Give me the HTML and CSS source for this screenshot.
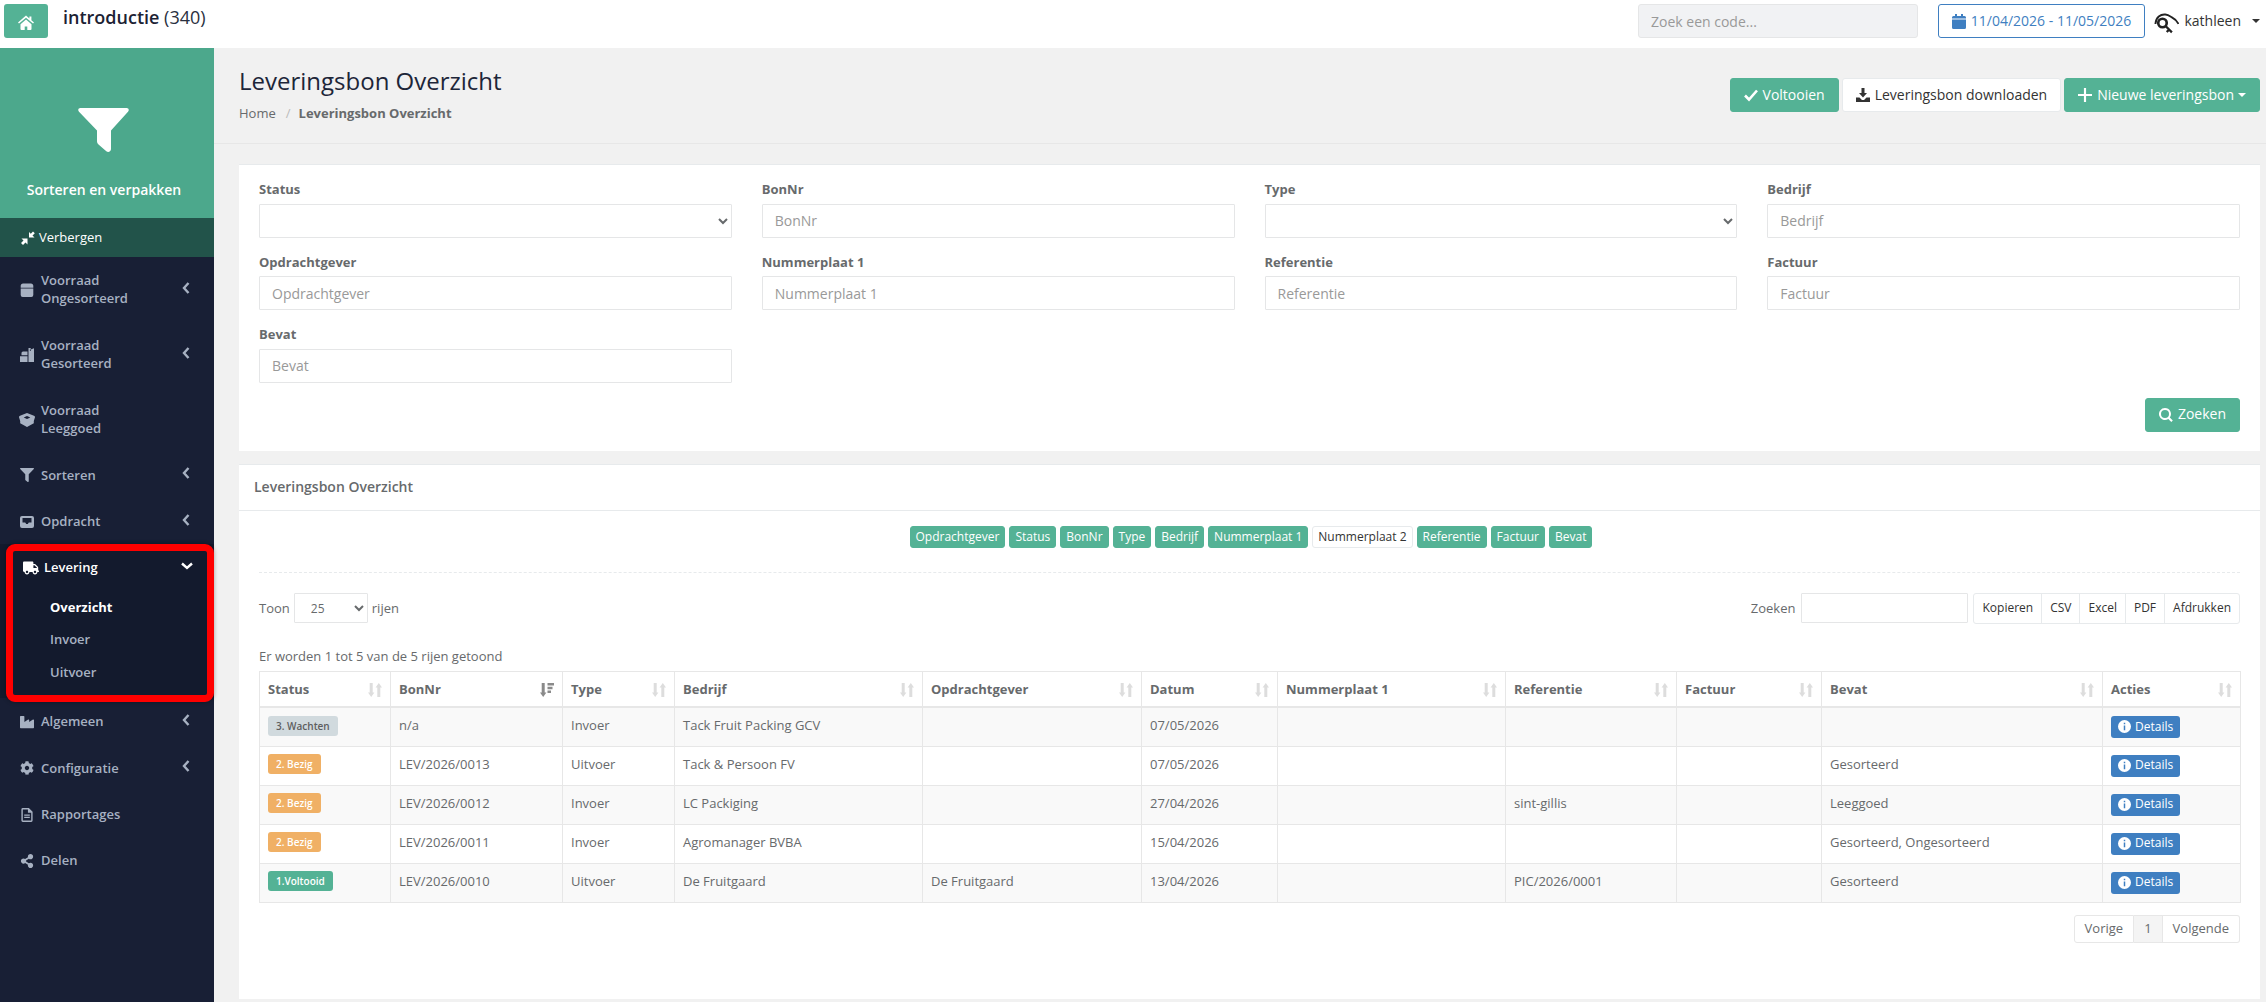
FILE: index.html
```html
<!DOCTYPE html>
<html lang="nl">
<head>
  <meta charset="UTF-8" />
  <title>Leveringsbon Overzicht</title>
  <link rel="stylesheet" href="styles.css">
</head>
<body>
  <svg class="sprite" xmlns="http://www.w3.org/2000/svg">
    <symbol id="i-home" viewBox="0 0 16 15"><path d="M8 .6 0 7.4l1 1.2 7-5.9 7 5.9 1-1.2-2.6-2.2V1.400h-2v2.100zM2.500 9.200 8 4.600l5.500 4.600V14a1 1 0 0 1-1 1H9.300v-3.500H6.700V15H3.500a1 1 0 0 1-1-1z"/></symbol>
    <symbol id="i-funnel" viewBox="0 0 51 44" preserveAspectRatio="none"><path d="M2.500 0h46c2.200 0 3 2.200 1.500 3.700L33 22.500V41c0 2.500-2.700 3.800-4.700 2.200l-7.500-6.500c-1.100-.9-1.800-2-1.800-3.500V22.500L1 3.700C-.5 2.200.3 0 2.500 0z"/></symbol>
    <symbol id="i-compress" viewBox="0 0 14 14"><path d="M8 6.500V1l1.800 1.800L12 .5l1.800 1.700-2.300 2.300 2 2zM6.500 7.500v6l-2-2L2 14l-2-2 2.500-2.500-2-2z"/></symbol>
    <symbol id="i-box" viewBox="0 0 12 12"><path d="M.6 4.700h10.800v5.600A1.700 1.700 0 0 1 9.700 12H2.300A1.700 1.700 0 0 1 .6 10.300zM2.600.4h6.800c1.200 0 2 .9 2 2v1.600H.6V2.400c0-1.100.8-2 2-2z"/></symbol>
    <symbol id="i-boxes" viewBox="0 0 14 14"><path d="M8.500 0h2.200v1.500h-.8V3h.8V1.500L14 .3V14H8.500zM3 3.500h4.500v3.700H1.500V5a1.500 1.500 0 0 1 1.500-1.500zM0 8.200h7.500V14H0z"/></symbol>
    <symbol id="i-hex" viewBox="0 0 16 14"><path fill-rule="evenodd" d="M8 0l7 2.800c.7.300 1 .8 1 1.500L14.800 8v2.300L8 14l-6.800-3.700V8L0 4.300c0-.7.300-1.200 1-1.500zM8 3 4.700 4.500 8 6l3.300-1.500z"/></symbol>
    <symbol id="i-filter" viewBox="0 0 512 512"><path d="M487.976 0H24.028C2.710 0-8.047 25.866 7.058 40.971L192 225.941V432c0 7.831 3.821 15.170 10.237 19.662l80 55.980C298.020 518.690 320 507.493 320 487.980V225.941l184.947-184.970C520.021 25.896 509.338 0 487.976 0z"/></symbol>
    <symbol id="i-inbox" viewBox="0 0 14 12"><path fill-rule="evenodd" d="M2 0h10a2 2 0 0 1 2 2v8a2 2 0 0 1-2 2H2a2 2 0 0 1-2-2V2a2 2 0 0 1 2-2zm.5 2v4.500h2.700l1 1.500h1.600l1-1.500h2.700V2z"/></symbol>
    <symbol id="i-truck" viewBox="0 0 640 512"><path d="M624 352h-16V243.900c0-12.700-5.100-24.900-14.100-33.900L494 110.100c-9-9-21.200-14.100-33.900-14.100H416V48c0-26.500-21.500-48-48-48H48C21.500 0 0 21.500 0 48v320c0 26.500 21.500 48 48 48h16c0 53 43 96 96 96s96-43 96-96h128c0 53 43 96 96 96s96-43 96-96h48c8.800 0 16-7.200 16-16v-32c0-8.800-7.200-16-16-16zM160 464c-26.500 0-48-21.500-48-48s21.500-48 48-48 48 21.500 48 48-21.500 48-48 48zm320 0c-26.500 0-48-21.500-48-48s21.500-48 48-48 48 21.500 48 48-21.500 48-48 48zm80-208H416V144h44.100l99.900 99.900V256z"/></symbol>
    <symbol id="i-industry" viewBox="0 0 512 512"><path d="M475.115 163.781L336 252.309v-68.280c0-18.916-20.931-30.399-36.885-20.248L160 252.309V56c0-13.255-10.745-24-24-24H24C10.745 32 0 42.745 0 56v400c0 13.255 10.745 24 24 24h464c13.255 0 24-10.745 24-24V184.029c0-18.917-20.931-30.399-36.885-20.248z"/></symbol>
    <symbol id="i-cog" viewBox="0 0 512 512"><path d="M487.400 315.700l-42.600-24.600c4.300-23.200 4.300-47 0-70.200l42.600-24.600c4.900-2.800 7.100-8.600 5.500-14-11.100-35.600-30-67.800-54.700-94.600-3.800-4.100-10-5.100-14.800-2.300L380.800 110c-17.900-15.400-38.500-27.300-60.800-35.100V25.800c0-5.600-3.900-10.500-9.400-11.700-36.700-8.200-74.300-7.800-109.200 0-5.500 1.200-9.400 6.100-9.400 11.700V75c-22.200 7.900-42.800 19.800-60.800 35.100L88.700 85.500c-4.900-2.800-11-1.900-14.800 2.300-24.700 26.700-43.600 58.900-54.700 94.600-1.700 5.400.6 11.200 5.500 14L67.300 221c-4.300 23.200-4.300 47 0 70.200l-42.600 24.600c-4.900 2.800-7.100 8.600-5.500 14 11.100 35.600 30 67.800 54.700 94.600 3.800 4.100 10 5.100 14.800 2.300l42.600-24.600c17.900 15.400 38.500 27.300 60.800 35.100v49.200c0 5.600 3.900 10.500 9.400 11.700 36.700 8.200 74.300 7.800 109.200 0 5.500-1.200 9.400-6.100 9.400-11.700v-49.200c22.200-7.900 42.800-19.800 60.800-35.100l42.600 24.600c4.900 2.800 11 1.900 14.800-2.300 24.700-26.700 43.600-58.900 54.700-94.600 1.500-5.500-.7-11.300-5.600-14.100zM256 336c-44.100 0-80-35.900-80-80s35.900-80 80-80 80 35.900 80 80-35.900 80-80 80z"/></symbol>
    <symbol id="i-file" viewBox="0 0 12 15"><path fill-rule="evenodd" d="M1.500 0H8l4 4v9.500a1.500 1.500 0 0 1-1.500 1.500h-9A1.500 1.500 0 0 1 0 13.500v-12A1.500 1.500 0 0 1 1.500 0zm0 1.500v12h9V5H7V1.500zM3 7h6v1.200H3zm0 2.500h6v1.200H3z"/></symbol>
    <symbol id="i-share" viewBox="0 0 448 512"><path d="M352 320c-22.608 0-43.387 7.819-59.790 20.895l-102.486-64.054a96.551 96.551 0 0 0 0-41.683l102.486-64.054C308.613 184.181 329.392 192 352 192c53.019 0 96-42.981 96-96S405.019 0 352 0s-96 42.981-96 96c0 7.158.79 14.130 2.276 20.841L155.790 180.895C139.387 167.819 118.608 160 96 160c-53.019 0-96 42.981-96 96s42.981 96 96 96c22.608 0 43.387-7.819 59.790-20.895l102.486 64.054A96.301 96.301 0 0 0 256 416c0 53.019 42.981 96 96 96s96-42.981 96-96-42.981-96-96-96z"/></symbol>
    <symbol id="i-left" viewBox="0 0 8 12"><path d="M6.500 1 2 6l4.500 5" fill="none" stroke="currentColor" stroke-width="2.400"/></symbol>
    <symbol id="i-down" viewBox="0 0 12 8"><path d="M1 1.500 6 6l5-4.500" fill="none" stroke="currentColor" stroke-width="2.400"/></symbol>
    <symbol id="i-calendar" viewBox="0 0 14 15"><path d="M0 5.500h14v8A1.500 1.500 0 0 1 12.500 15h-11A1.500 1.500 0 0 1 0 13.500zM3 0h2v2h4V0h2v2h1.500A1.500 1.500 0 0 1 14 3.500v1H0v-1A1.500 1.500 0 0 1 1.500 2H3z"/></symbol>
    <symbol id="i-key" viewBox="0 0 27 22"><g fill="none" stroke="currentColor"><path d="M1.500 12C2 5 7 1.500 12 2c4 .5 5 2 7 3 2 1 5 3 7 7" stroke-width="2"/><circle cx="9" cy="11" r="4.500" stroke-width="2.800"/><path d="M12.500 14.500 19 21M16 18l-2.500 2.500" stroke-width="2.400"/></g></symbol>
    <symbol id="i-check" viewBox="0 0 14 12"><path d="M1 6.500 5 10.500 13 1.500" fill="none" stroke="currentColor" stroke-width="2.600"/></symbol>
    <symbol id="i-download" viewBox="0 0 14 14"><path d="M5.500 0h3v5H11L7 9.500 3 5h2.500zM0 9.500h3.500L6 12h2l2.500-2.500H14V14H0z"/></symbol>
    <symbol id="i-plus" viewBox="0 0 13 13"><path d="M5.500 0h2v5.500H13v2H7.500V13h-2V7.500H0v-2h5.500z"/></symbol>
    <symbol id="i-search" viewBox="0 0 14 14"><path d="M6 0a6 6 0 0 1 4.800 9.500l3 3-1.500 1.500-3-3A6 6 0 1 1 6 0zm0 2a4 4 0 1 0 0 8 4 4 0 0 0 0-8z"/></symbol>
    <symbol id="i-info" viewBox="0 0 14 14"><path fill-rule="evenodd" d="M7 0a7 7 0 1 1 0 14A7 7 0 0 1 7 0zM6.200 3v1.700h1.600V3zM6.200 6v5h1.600V6z"/></symbol>
    <symbol id="i-sort" viewBox="0 0 14 14"><path d="M1.700 0h3v9.500h1.700L3.200 14 0 9.500h1.700zM9.300 14h3V4.500H14L10.800 0 7.600 4.500h1.700z"/></symbol>
    <symbol id="i-sort-desc" viewBox="0 0 14 14"><path d="M1.700 0h3v9.500h1.700L3.200 14 0 9.500h1.700zM7.500 0H14v2.400H7.500zM7.500 3.800h5v2.400h-5zM7.500 7.600H11V10H7.500z"/></symbol>
  </svg>

  <header class="topbar">
    <a class="home-btn"><svg class="ic"><use href="#i-home"/></svg></a>
    <div class="app-title"><strong>introductie</strong> (340)</div>
    <input class="code-search" type="text" placeholder="Zoek een code..." />
    <a class="date-btn"><svg class="ic"><use href="#i-calendar"/></svg>11/04/2026 - 11/05/2026</a>
    <div class="user"><svg class="ic-key"><use href="#i-key"/></svg>kathleen<span class="caret dark"></span></div>
  </header>

  <div class="layout">
    <nav class="sidebar">
      <div class="side-head">
        <svg class="funnel"><use href="#i-funnel"/></svg>
        <div class="side-name">Sorteren en verpakken</div>
      </div>
      <a class="side-toggle"><svg class="ic"><use href="#i-compress"/></svg>Verbergen</a>
      <ul class="menu">
        <li><a><svg class="ic"><use href="#i-box"/></svg><span>Voorraad<br>Ongesorteerd</span><svg class="arrow"><use href="#i-left"/></svg></a></li>
        <li><a><svg class="ic"><use href="#i-boxes"/></svg><span>Voorraad<br>Gesorteerd</span><svg class="arrow"><use href="#i-left"/></svg></a></li>
        <li><a><svg class="ic wide"><use href="#i-hex"/></svg><span>Voorraad<br>Leeggoed</span></a></li>
        <li><a><svg class="ic"><use href="#i-filter"/></svg><span>Sorteren</span><svg class="arrow"><use href="#i-left"/></svg></a></li>
        <li><a><svg class="ic"><use href="#i-inbox"/></svg><span>Opdracht</span><svg class="arrow"><use href="#i-left"/></svg></a></li>
        <li class="active">
          <a><svg class="ic wide"><use href="#i-truck"/></svg><span>Levering</span><svg class="arrow-down"><use href="#i-down"/></svg></a>
          <ul class="submenu">
            <li class="current"><a>Overzicht</a></li>
            <li><a>Invoer</a></li>
            <li><a>Uitvoer</a></li>
          </ul>
        </li>
        <li><a><svg class="ic"><use href="#i-industry"/></svg><span>Algemeen</span><svg class="arrow"><use href="#i-left"/></svg></a></li>
        <li><a><svg class="ic"><use href="#i-cog"/></svg><span>Configuratie</span><svg class="arrow"><use href="#i-left"/></svg></a></li>
        <li><a><svg class="ic"><use href="#i-file"/></svg><span>Rapportages</span></a></li>
        <li><a><svg class="ic"><use href="#i-share"/></svg><span>Delen</span></a></li>
      </ul>
      <div class="highlight"></div>
    </nav>

    <main class="main">
      <div class="page-head">
        <div>
          <h2>Leveringsbon Overzicht</h2>
          <div class="crumbs">Home <i>/</i> <b>Leveringsbon Overzicht</b></div>
        </div>
        <div class="head-actions">
          <a class="btn green"><svg class="ic"><use href="#i-check"/></svg>Voltooien</a>
          <a class="btn white"><svg class="ic"><use href="#i-download"/></svg>Leveringsbon downloaden</a>
          <a class="btn green"><svg class="ic"><use href="#i-plus"/></svg>Nieuwe leveringsbon<span class="caret"></span></a>
        </div>
      </div>

      <div class="content">
        <section class="panel filters">
          <div class="filter-grid">
            <div class="field"><label>Status</label><select></select></div>
            <div class="field"><label>BonNr</label><input type="text" placeholder="BonNr" /></div>
            <div class="field"><label>Type</label><select></select></div>
            <div class="field"><label>Bedrijf</label><input type="text" placeholder="Bedrijf" /></div>
            <div class="field"><label>Opdrachtgever</label><input type="text" placeholder="Opdrachtgever" /></div>
            <div class="field"><label>Nummerplaat 1</label><input type="text" placeholder="Nummerplaat 1" /></div>
            <div class="field"><label>Referentie</label><input type="text" placeholder="Referentie" /></div>
            <div class="field"><label>Factuur</label><input type="text" placeholder="Factuur" /></div>
            <div class="field"><label>Bevat</label><input type="text" placeholder="Bevat" /></div>
          </div>
          <div class="filter-actions">
            <a class="btn green"><svg class="ic"><use href="#i-search"/></svg>Zoeken</a>
          </div>
        </section>

        <section class="panel results">
          <div class="panel-title">Leveringsbon Overzicht</div>
          <div class="panel-body">
            <div class="chips">
              <a class="chip">Opdrachtgever</a>
              <a class="chip">Status</a>
              <a class="chip">BonNr</a>
              <a class="chip">Type</a>
              <a class="chip">Bedrijf</a>
              <a class="chip">Nummerplaat 1</a>
              <a class="chip off">Nummerplaat 2</a>
              <a class="chip">Referentie</a>
              <a class="chip">Factuur</a>
              <a class="chip">Bevat</a>
            </div>
            <div class="tools">
              <div class="length">Toon <select><option>25</option></select> rijen</div>
              <div class="tools-right">
                <label class="search">Zoeken <input type="text" /></label>
                <div class="exports">
                  <a>Kopieren</a><a>CSV</a><a>Excel</a><a>PDF</a><a>Afdrukken</a>
                </div>
              </div>
            </div>
            <div class="count">Er worden 1 tot 5 van de 5 rijen getoond</div>
            <table class="data">
              <colgroup>
                <col class="c1"><col class="c2"><col class="c3"><col class="c4"><col class="c5"><col class="c6">
                <col class="c7"><col class="c8"><col class="c9"><col class="c10"><col class="c11">
              </colgroup>
              <thead>
                <tr>
                  <th>Status<svg class="sort"><use href="#i-sort"/></svg></th>
                  <th>BonNr<svg class="sort on"><use href="#i-sort-desc"/></svg></th>
                  <th>Type<svg class="sort"><use href="#i-sort"/></svg></th>
                  <th>Bedrijf<svg class="sort"><use href="#i-sort"/></svg></th>
                  <th>Opdrachtgever<svg class="sort"><use href="#i-sort"/></svg></th>
                  <th>Datum<svg class="sort"><use href="#i-sort"/></svg></th>
                  <th>Nummerplaat 1<svg class="sort"><use href="#i-sort"/></svg></th>
                  <th>Referentie<svg class="sort"><use href="#i-sort"/></svg></th>
                  <th>Factuur<svg class="sort"><use href="#i-sort"/></svg></th>
                  <th>Bevat<svg class="sort"><use href="#i-sort"/></svg></th>
                  <th>Acties<svg class="sort"><use href="#i-sort"/></svg></th>
                </tr>
              </thead>
              <tbody>
                <tr>
                  <td><span class="badge wait">3. Wachten</span></td><td>n/a</td><td>Invoer</td><td>Tack Fruit Packing GCV</td><td></td><td>07/05/2026</td><td></td><td></td><td></td><td></td>
                  <td><a class="details"><svg class="ic"><use href="#i-info"/></svg>Details</a></td>
                </tr>
                <tr>
                  <td><span class="badge busy">2. Bezig</span></td><td>LEV/2026/0013</td><td>Uitvoer</td><td>Tack &amp; Persoon FV</td><td></td><td>07/05/2026</td><td></td><td></td><td></td><td>Gesorteerd</td>
                  <td><a class="details"><svg class="ic"><use href="#i-info"/></svg>Details</a></td>
                </tr>
                <tr>
                  <td><span class="badge busy">2. Bezig</span></td><td>LEV/2026/0012</td><td>Invoer</td><td>LC Packiging</td><td></td><td>27/04/2026</td><td></td><td>sint-gillis</td><td></td><td>Leeggoed</td>
                  <td><a class="details"><svg class="ic"><use href="#i-info"/></svg>Details</a></td>
                </tr>
                <tr>
                  <td><span class="badge busy">2. Bezig</span></td><td>LEV/2026/0011</td><td>Invoer</td><td>Agromanager BVBA</td><td></td><td>15/04/2026</td><td></td><td></td><td></td><td>Gesorteerd, Ongesorteerd</td>
                  <td><a class="details"><svg class="ic"><use href="#i-info"/></svg>Details</a></td>
                </tr>
                <tr>
                  <td><span class="badge done">1.Voltooid</span></td><td>LEV/2026/0010</td><td>Uitvoer</td><td>De Fruitgaard</td><td>De Fruitgaard</td><td>13/04/2026</td><td></td><td>PIC/2026/0001</td><td></td><td>Gesorteerd</td>
                  <td><a class="details"><svg class="ic"><use href="#i-info"/></svg>Details</a></td>
                </tr>
              </tbody>
            </table>
            <div class="pager">
              <a>Vorige</a><a class="now">1</a><a>Volgende</a>
            </div>
          </div>
        </section>
      </div>
    </main>
  </div>
</body>
</html>
```

FILE: styles.css
```css
/* Base */
* {
  box-sizing: border-box;
}

body {
  margin: 0;
  width: 2266px;
  height: 1002px;
  overflow: hidden;
  font-family: "Open Sans", "Liberation Sans", sans-serif;
  font-size: 13px;
  line-height: 18.57px;
  color: #676a6c;
  background: #f1f1f1;
}

.sprite {
  display: none;
}

.ic {
  width: 14px;
  height: 14px;
  fill: currentColor;
  flex: none;
}

.caret {
  display: inline-block;
  vertical-align: middle;
  border-top: 4px solid #fff;
  border-left: 4px solid transparent;
  border-right: 4px solid transparent;
}

.caret.dark {
  border-top-color: #333;
  margin-left: 11px;
}

/* Top bar */
.topbar {
  height: 48px;
  background: #fff;
  display: flex;
  align-items: flex-start;
  padding: 4px 6px 0 4px;
}

.home-btn {
  width: 44px;
  height: 34px;
  background: #54b295;
  border-radius: 3px;
  color: #fff;
  display: flex;
  align-items: center;
  justify-content: center;
}

.home-btn .ic {
  width: 16px;
  height: 15px;
  margin-top: 2px;
}

.app-title {
  margin-left: 15px;
  font-size: 18px;
  line-height: 26px;
  color: #2a3040;
}

.app-title strong {
  font-weight: 600;
  color: #1c2233;
}

.code-search {
  margin-left: auto;
  width: 280px;
  height: 34px;
  padding: 0 12px;
  background: #f1f2f4;
  border: 1px solid #e5e6e7;
  border-radius: 3px;
  font: 14px "Open Sans", sans-serif;
}

.code-search::placeholder,
.field input::placeholder {
  color: #999;
  opacity: 1;
}

.date-btn {
  margin-left: 20px;
  width: 207px;
  height: 34px;
  border: 1px solid #3f7fc1;
  border-radius: 3px;
  color: #3f7fc1;
  font-size: 14px;
  display: flex;
  align-items: center;
  justify-content: center;
  gap: 5px;
}

.date-btn .ic {
  width: 14px;
  height: 15px;
}

.user {
  margin-left: 9px;
  width: 106px;
  height: 34px;
  display: flex;
  align-items: center;
  color: #333;
  font-size: 14px;
}

.ic-key {
  width: 27px;
  height: 22px;
  margin-right: 5px;
  margin-top: 3px;
  color: #222;
}

/* Sidebar */
.layout {
  display: flex;
  height: 954px;
}

.sidebar {
  position: relative;
  width: 214px;
  flex: none;
  background: #181f35;
  color: #a7b1c2;
  font-weight: 600;
}

.side-head {
  height: 170px;
  background: #4ca88c;
  padding-top: 60px;
  color: #fff;
  text-align: center;
}

.funnel {
  display: block;
  width: 51px;
  height: 44px;
  margin: 0 0 0 78px;
  fill: #fff;
}

.side-name {
  margin-top: 29px;
  padding-right: 6px;
  font-size: 14px;
  font-weight: 600;
}

.side-toggle {
  height: 39px;
  background: #22534a;
  color: #fff;
  padding-left: 21px;
  display: flex;
  align-items: center;
  gap: 4px;
  font-weight: 400;
}

.menu,
.submenu {
  list-style: none;
  margin: 0;
  padding: 0;
}

.menu > li > a {
  display: flex;
  align-items: center;
  padding: 13.9px 24px 13.9px 20px;
}

.menu span {
  flex: 1;
  margin-left: 7px;
}

.menu .ic {
  margin-top: 1px;
}

.menu .ic.wide {
  width: 16px;
  margin-left: -1px;
  margin-right: -1px;
}

.arrow {
  width: 8px;
  height: 12px;
  flex: none;
  margin-top: -3px;
  color: #a7b1c2;
}

.arrow-down {
  width: 12px;
  height: 8px;
  flex: none;
  color: #fff;
  margin-top: -3px;
  margin-right: -3px;
}

.menu li.active {
  background: #131a2d;
  padding-bottom: 10px;
}

.menu .active > a {
  color: #fff;
  padding-left: 24px;
}

.menu .active span {
  margin-left: 6px;
}

.submenu a {
  display: block;
  padding: 7px 10px 7px 50px;
}

.submenu .current a {
  color: #fff;
  font-weight: 700;
}

/* the red marker somebody drew over the screenshot */
.highlight {
  position: absolute;
  left: 6px;
  top: 496px;
  width: 208px;
  height: 158px;
  border: 7px solid #f00;
  border-radius: 9px;
  box-shadow: 0 0 4px rgba(0, 0, 0, .35);
}

/* Main */
.main {
  flex: 1;
  min-width: 0;
}

.page-head {
  height: 96px;
  border-bottom: 1px solid #e7e7e7;
  padding: 20px 6px 0 25px;
  display: flex;
  justify-content: space-between;
}

.page-head h2 {
  margin: 0;
  font-size: 24px;
  font-weight: 400;
  line-height: 26px;
  color: #1d2639;
}

.crumbs {
  margin-top: 10px;
  display: flex;
}

.crumbs i {
  font-style: normal;
  color: #bbb;
  margin: 0 8px 0 10px;
}

.crumbs b {
  font-weight: 700;
}

.head-actions {
  display: flex;
  gap: 3px;
  margin-top: 10px;
  align-items: flex-start;
}

.btn {
  height: 34px;
  padding: 0 13px;
  border-radius: 3px;
  font-size: 14px;
  display: inline-flex;
  align-items: center;
  gap: 5px;
}

.btn.green {
  background: #54b295;
  color: #fff;
  border: 1px solid #54b295;
}

.btn.white {
  background: #fff;
  color: #333;
  border: 1px solid #e7eaec;
}

.head-actions .btn .caret {
  margin-left: -1px;
}

.content {
  padding: 20px 6px 0 25px;
}

.panel {
  background: #fff;
  border-top: 1px solid #e7eaec;
}

/* Filter form */
.filters {
  height: 287px;
  padding: 15px 20px 0;
  margin-bottom: 13px;
}

.filter-grid {
  display: grid;
  grid-template-columns: repeat(4, 1fr);
  column-gap: 30px;
  row-gap: 15px;
}

.field label {
  display: block;
  font-weight: 700;
  margin-bottom: 5px;
}

.field input,
.field select {
  display: block;
  width: 100%;
  height: 34px;
  padding: 0 12px;
  background: #fff;
  border: 1px solid #e5e6e7;
  border-radius: 1px;
  font: 14px "Open Sans", sans-serif;
  color: #676a6c;
}

.filter-actions {
  display: flex;
  justify-content: flex-end;
  margin-top: 15px;
}

/* Result table */
.results {
  height: 535px;
}

.panel-title {
  height: 46px;
  padding-left: 15px;
  border-bottom: 1px solid #e7eaec;
  display: flex;
  align-items: center;
  font-size: 14px;
  font-weight: 600;
}

.panel-body {
  padding: 15px 20px 0;
}

.chips {
  display: flex;
  justify-content: center;
  gap: 4px;
  padding: 0 0 24px 3px;
  border-bottom: 1px dashed #e7eaec;
}

.chip {
  height: 22px;
  padding: 0 5px;
  border: 1px solid #54b295;
  border-radius: 3px;
  background: #54b295;
  color: #fff;
  font-size: 12px;
  line-height: 20px;
}

.chip.off {
  background: #fff;
  border-color: #e7eaec;
  color: #333;
}

.tools {
  display: flex;
  justify-content: space-between;
  margin-top: 20px;
  height: 30px;
}

.length {
  display: flex;
  align-items: center;
  gap: 4px;
}

.length select {
  width: 74px;
  height: 30px;
  padding: 0 12px;
  background: #fff;
  border: 1px solid #e5e6e7;
  border-radius: 1px;
  font: 12px "Open Sans", sans-serif;
  color: #676a6c;
}

.tools-right {
  display: flex;
  gap: 5px;
}

.search {
  display: flex;
  align-items: center;
  gap: 6px;
}

.search input {
  width: 167px;
  height: 30px;
  border: 1px solid #e5e6e7;
  border-radius: 1px;
}

.exports {
  display: flex;
  height: 31px;
  border: 1px solid #e7eaec;
  border-radius: 3px;
  font-size: 12px;
  color: #333;
}

.exports a {
  display: flex;
  align-items: center;
  padding: 0 8px;
  border-left: 1px solid #e7eaec;
}

.exports a:first-child {
  border-left: 0;
}

.count {
  margin-top: 24px;
  margin-bottom: 5px;
}

.data {
  width: 1981px;
  border-collapse: collapse;
  table-layout: fixed;
}

.c1 { width: 131px; }
.c2 { width: 172px; }
.c3 { width: 112px; }
.c4 { width: 248px; }
.c5 { width: 219px; }
.c6 { width: 136px; }
.c7 { width: 228px; }
.c8 { width: 171px; }
.c9 { width: 145px; }
.c10 { width: 281px; }
.c11 { width: 138px; }

.data th,
.data td {
  border: 1px solid #e7e7e7;
  padding: 0 8px;
  text-align: left;
  vertical-align: middle;
}

.data th {
  position: relative;
  height: 36px;
  font-weight: 700;
  border-bottom-width: 2px;
}

.data td {
  height: 39px;
  padding-bottom: 3px;
}

.data tbody tr:nth-child(odd) {
  background: #f9f9f9;
}

.sort {
  position: absolute;
  right: 8px;
  top: 11px;
  width: 14px;
  height: 14px;
  fill: #ddd;
}

.sort.on {
  fill: #8a8a8a;
}

.badge {
  display: inline-block;
  height: 20px;
  padding: 0 8px;
  border-radius: 3px;
  font-size: 10px;
  font-weight: 600;
  line-height: 20px;
  color: #fff;
  vertical-align: middle;
}

.badge.wait {
  background: #d1dade;
  color: #5e5e5e;
}

.badge.busy {
  background: #f0b065;
}

.badge.done {
  background: #54b295;
}

.details {
  display: inline-flex;
  align-items: center;
  gap: 4px;
  height: 22px;
  padding: 0 7px;
  background: #3f7fc1;
  border-radius: 3px;
  color: #fff;
  font-size: 12px;
  vertical-align: middle;
  margin-top: 3px;
}

.details .ic {
  width: 13px;
  height: 13px;
}

.pager {
  display: flex;
  justify-content: flex-end;
  margin-top: 12px;
}

.pager a {
  height: 28px;
  padding: 0 10px;
  border: 1px solid #e7e7e7;
  border-left: 0;
  display: flex;
  align-items: center;
}

.pager a:first-child {
  border-left: 1px solid #e7e7e7;
  border-radius: 3px 0 0 3px;
}

.pager a:last-child {
  border-radius: 0 3px 3px 0;
}

.pager .now {
  background: #f4f4f4;
}
```
